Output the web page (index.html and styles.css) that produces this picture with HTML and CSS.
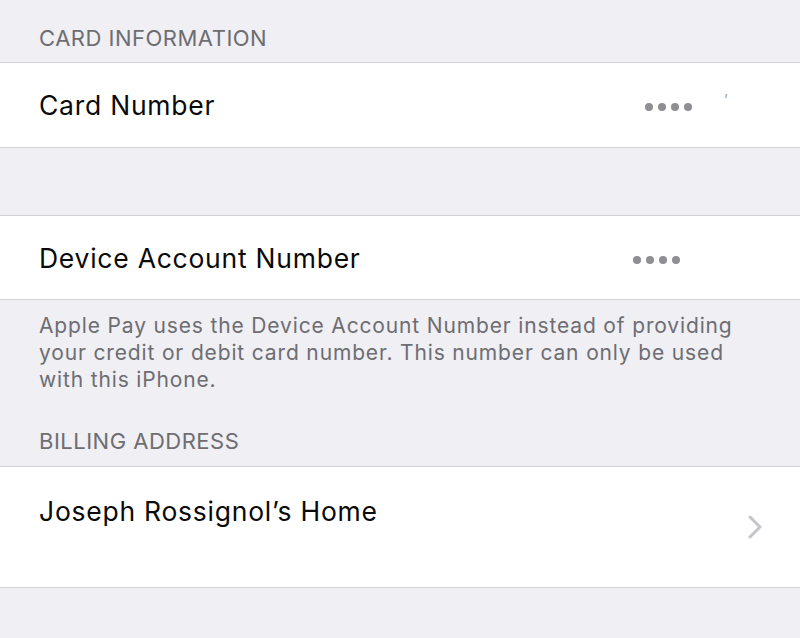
FILE: index.html
```html
<!DOCTYPE html>
<html>
<head>
<meta charset="utf-8">
<link rel="stylesheet" href="styles.css">
</head>
<body>
<div class="page">
  <div class="section-header">CARD INFORMATION</div>
  <div class="group">
    <div class="row row-card">
      <span class="label">Card Number</span>
      <span class="dots dots-card"><i></i><i></i><i></i><i></i></span>
      <span class="tick">&#x2019;</span>
    </div>
  </div>
  <div class="spacer"></div>
  <div class="group">
    <div class="row row-device">
      <span class="label">Device Account Number</span>
      <span class="dots dots-device"><i></i><i></i><i></i><i></i></span>
    </div>
  </div>
  <div class="footer">Apple Pay uses the Device Account Number instead of providing your credit or debit card number. This number can only be used with this iPhone.</div>
  <div class="section-header section-billing">BILLING ADDRESS</div>
  <div class="group">
    <div class="row row-address">
      <span class="label label-top">Joseph Rossignol’s Home</span>
      <svg class="chevron" width="14" height="24" viewBox="0 0 14 24"><path d="M2 2 L12 12 L2 22" fill="none" stroke="#c4c4c9" stroke-width="3" stroke-linecap="round" stroke-linejoin="round"/></svg>
    </div>
  </div>
</div>
</body>
</html>
```

FILE: styles.css
```css
html, body {
  margin: 0;
  padding: 0;
  background: #efeff4;
}
body {
  font-family: "Inter", "Noto Sans", "Liberation Sans", sans-serif;
  width: 800px;
  height: 638px;
  overflow: hidden;
}
.page {
  display: flex;
  flex-direction: column;
}
.section-header {
  height: 62px;
  box-sizing: border-box;
  padding: 24px 0 0 39px;
  font-size: 22px;
  line-height: 28px;
  color: #6d6d72;
  letter-spacing: 0.5px;
}
.section-billing {
  height: 66px;
  padding-top: 27px;
}
.group {
  background: #ffffff;
  border-top: 1px solid #d3d2d8;
  border-bottom: 1px solid #d3d2d8;
}
.row {
  display: flex;
  align-items: center;
  padding-left: 39px;
  position: relative;
}
.row-card { height: 84px; }
.row-device { height: 83px; }
.row-address { height: 120px; }
.label {
  font-size: 26.5px;
  letter-spacing: 0.75px;
  color: #0a0a0a;
  flex: 1;
}
.label-top {
  align-self: flex-start;
  margin-top: 28px;
}
.dots {
  display: flex;
  gap: 5px;
}
.dots i {
  display: block;
  width: 8px;
  height: 8px;
  border-radius: 50%;
  background: #8e8e93;
}
.dots-card { margin-right: 108px; margin-top: 4px; }
.dots-device { margin-right: 120px; margin-top: 4px; }
.tick {
  position: absolute;
  left: 724px;
  top: 28px;
  font-size: 14px;
  color: #9a9aa0;
}
.spacer { height: 67px; }
.footer {
  padding: 12px 30px 0 39px;
  font-size: 21px;
  line-height: 27px;
  letter-spacing: 0.85px;
  color: #6d6d72;
  height: 100px;
  box-sizing: border-box;
}
.chevron {
  margin-right: 38px;
}
```
